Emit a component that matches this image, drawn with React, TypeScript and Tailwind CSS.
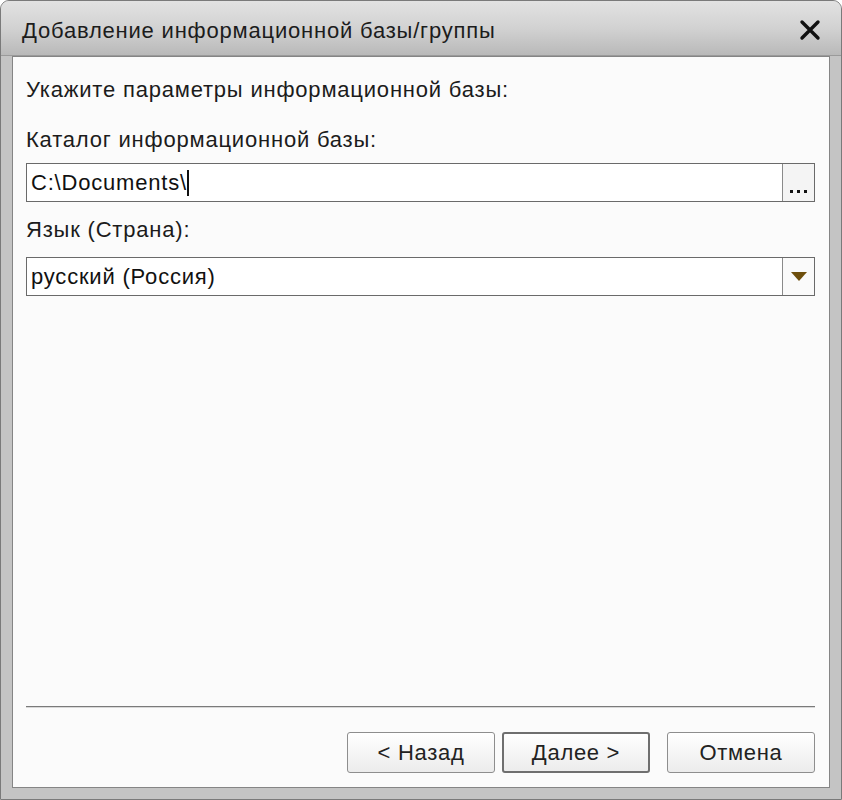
import React from 'react';

const font = { fontFamily: '"Liberation Sans", Arial, sans-serif' };

const DialogButton: React.FC<{ label: string; primary?: boolean }> = ({ label, primary }) => (
    <button
        className={
            'w-[148px] h-[41px] rounded-[3px] bg-gradient-to-b from-[#ffffff] to-[#ececec] text-[22px] tracking-[0.7px] text-[#222222] ' +
            (primary ? 'border-2 border-[#6f6f6f]' : 'border border-[#8e8e8e]')
        }
    >
        {label}
    </button>
);

export default function App() {
    return (
        <div style={font} className="w-[842px] h-[800px] flex flex-col bg-[#c4c4c4] border border-[#7a7a7a] rounded-t-[9px] overflow-hidden">
            {/* title bar */}
            <div className="h-[54px] shrink-0 flex items-center justify-between pl-[21px] pr-[20px] bg-gradient-to-b from-[#e2e2e2] via-[#d2d2d2] to-[#b9b9b9]">
                <span className="text-[22px] tracking-[0.8px] text-[#1c1c1c] pt-[5px]">Добавление информационной базы/группы</span>
                <svg width="22" height="22" viewBox="0 0 22 22" className="mt-[4px]">
                    <path d="M3 3 L19 19 M19 3 L3 19" stroke="#111111" strokeWidth="3.4" strokeLinecap="round" />
                </svg>
            </div>

            {/* body */}
            <div className="flex-1 flex px-[11px] pb-[11px] border-t border-[#9a9a9a]">
                <div className="flex-1 flex flex-col bg-[#fbfbfb] border border-[#858585] pl-[13px] pr-[14px] text-[22px] tracking-[0.8px]">
                    <div className="mt-[20px] h-[26px] leading-[26px] text-[#1c1c1c]">Укажите параметры информационной базы:</div>
                    <div className="mt-[24px] h-[26px] leading-[26px] text-[#1c1c1c]">Каталог информационной базы:</div>

                    <div className="mt-[10px] h-[39px] flex border border-[#6a6a6a] bg-white">
                        <div className="flex-1 flex items-center pl-[4px] text-[#111111]">
                            C:\Documents\<span className="inline-block w-[2px] h-[26px] bg-[#111111]" />
                        </div>
                        <div className="w-[32px] border-l border-[#8a8a8a] bg-[#f4f4f4] flex items-end justify-center pb-[8px] gap-[4px]">
                            <span className="w-[3px] h-[3px] bg-[#111111]" />
                            <span className="w-[3px] h-[3px] bg-[#111111]" />
                            <span className="w-[3px] h-[3px] bg-[#111111]" />
                        </div>
                    </div>

                    <div className="mt-[15px] h-[26px] leading-[26px] text-[#1c1c1c]">Язык (Страна):</div>

                    <div className="mt-[14px] h-[39px] flex border border-[#6a6a6a] bg-white">
                        <div className="flex-1 flex items-center pl-[4px] text-[#111111]">русский (Россия)</div>
                        <div className="w-[32px] border-l border-[#8a8a8a] bg-[#fafafa] flex items-center justify-center">
                            <svg width="16" height="9" viewBox="0 0 16 9">
                                <path d="M0 0 H16 L8 9 Z" fill="#6e4f0c" />
                            </svg>
                        </div>
                    </div>

                    <div className="flex-1" />

                    <div className="h-[2px] bg-[#7a7a7a] border-b border-[#d8d8d8]" />

                    <div className="mt-[24px] mb-[14px] flex justify-end">
                        <DialogButton label="< Назад" />
                        <div className="ml-[7px]">
                            <DialogButton label="Далее >" primary />
                        </div>
                        <div className="ml-[17px]">
                            <DialogButton label="Отмена" />
                        </div>
                    </div>
                </div>
            </div>
        </div>
    );
}
